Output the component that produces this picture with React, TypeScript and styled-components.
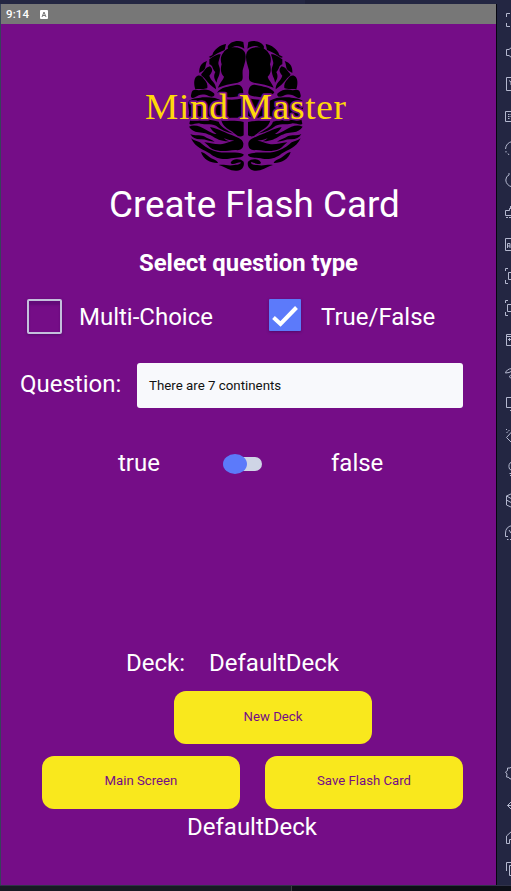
import React from "react";
import styled, { createGlobalStyle } from "styled-components";

const GlobalStyle = createGlobalStyle`
  * { box-sizing: border-box; }
  body { margin: 0; background: #232642; font-family: Roboto, "Liberation Sans", sans-serif; }
`;

const Emulator = styled.div`
  width: 511px;
  height: 891px;
  overflow: hidden;
  display: flex;
  flex-direction: column;
`;
const TitleStrip = styled.div`
  height: 4px;
  background: linear-gradient(90deg, #232642 0 305px, #1e2039 305px 350px, #232642 350px);
`;
const Middle = styled.div`
  display: flex;
  height: 881px;
  border-left: 1px solid #38405c;
`;
const Phone = styled.main`
  width: 495px;
  background: #750d87;
  color: #fff;
  display: flex;
  flex-direction: column;
`;
const StatusBar = styled.header`
  height: 20px;
  flex: none;
  background: #777;
  padding-left: 5px;
  display: flex;
  align-items: center;
  gap: 11px;
  font-size: 11.5px;
  font-weight: 500;
  letter-spacing: 0.1px;
`;
const Logo = styled.svg`
  display: block;
  margin: 6px 0 0 129px;
  flex: none;
`;
const Title = styled.h1`
  margin: 0;
  height: 49px;
  padding-left: 108px;
  font-size: 36.8px;
  font-weight: 400;
  line-height: 49px;
  white-space: nowrap;
`;
const Subtitle = styled.h2`
  margin: 10px 0 0;
  height: 48px;
  padding-left: 138px;
  font-size: 23.9px;
  font-weight: 700;
  line-height: 48px;
  white-space: nowrap;
`;
const Row = styled.div<{ $h: number; $top?: number; $left: number; $gap?: number }>`
  flex: none;
  display: flex;
  align-items: center;
  gap: ${(p) => p.$gap ?? 0}px;
  height: ${(p) => p.$h}px;
  margin-top: ${(p) => p.$top ?? 0}px;
  padding-left: ${(p) => p.$left}px;
`;
const Label = styled.span<{ $w?: number; $raise?: number }>`
  flex: none;
  width: ${(p) => (p.$w ? `${p.$w}px` : "auto")};
  padding-bottom: ${(p) => p.$raise ?? 0}px;
  font-size: 24px;
  line-height: 30px;
  white-space: nowrap;
`;
const Choice = styled.label<{ $w: number; $gap: number }>`
  display: flex;
  align-items: center;
  width: ${(p) => p.$w}px;
  gap: ${(p) => p.$gap}px;
`;
const EmptyBox = styled.span`
  width: 35px;
  height: 35px;
  margin-top: -1px;
  border: 2px solid rgba(205, 212, 230, 0.9);
  border-radius: 2px;
  box-shadow: 0 1px 3px rgba(30, 0, 60, 0.35), inset 0 4px 2px rgba(60, 0, 90, 0.3);
`;
const CheckedBox = styled.span`
  width: 32px;
  height: 32px;
  margin-top: -4px;
  background: #5c7afa;
  border-radius: 1px;
  box-shadow: 0 1px 3px rgba(30, 0, 60, 0.4);
`;
const Input = styled.div`
  width: 326px;
  height: 45px;
  border-radius: 3px;
  background: #f8f9fc;
  color: #111;
  padding-left: 12px;
  font-size: 13.3px;
  line-height: 46px;
`;
const Track = styled.span`
  flex: none;
  width: 30px;
  height: 14px;
  margin: 2px 69px 0 9px;
  display: flex;
  align-items: center;
  background: #cfd5e6;
  border-radius: 7px;
`;
const Thumb = styled.span`
  flex: none;
  width: 24px;
  height: 20px;
  margin-left: -9px;
  border-radius: 50%;
  background: #5c7afa;
`;
const Button = styled.button`
  flex: none;
  width: 198px;
  height: 53px;
  border: 0;
  border-radius: 12px;
  background: #f9e81d;
  color: #750d87;
  font: 400 13.2px/50px Roboto, sans-serif;
  padding: 0 0 2px;
`;
const Sidebar = styled.aside`
  width: 15px;
  border-left: 1px solid #060610;
  background: #232642;
  display: flex;
  flex-direction: column;
  justify-content: space-between;
`;
const ToolIcon = styled.svg`
  display: block;
  fill: none;
  stroke: #b4b8cf;
  stroke-width: 1;
`;
const BottomStrip = styled.div`
  height: 6px;
  display: flex;
  border-top: 1px solid #303348;
  background: #0d0f17;
`;
const Taskbar = styled.div`
  width: 292px;
  border-right: 1px solid #3c3e44;
  background: #181b24;
`;

/* Left hemisphere of the brain; the right one is its mirror image. */
const lobes = [
  "M293 50C298 36 321 28 340 36L343 56C323 42 308 48 300 57L294 58Z",
  "M236 81L247 75C252 57 271 45 288 42L284 60C270 64 255 75 242 83Z",
  "M280 68C293 48 331 46 344 66C352 84 342 104 338 121C336 141 345 153 323 158C300 161 280 166 264 173C268 160 280 149 282 140C270 130 272 113 275 103C270 87 273 76 280 68Z",
  "M238 88C254 75 267 71 272 73L266 94C262 106 273 111 269 128C267 141 261 145 260 158C252 146 250 138 256 126C247 119 249 105 238 103Z",
  "M208 129C206 110 216 97 231 93C225 105 229 118 218 123Z",
  "M214 132C224 122 228 111 240 109C251 118 246 128 238 137C242 153 259 158 258 178C245 170 235 160 226 148C220 139 212 138 214 132Z",
  "M197 142C205 131 217 138 221 146C230 154 234 165 232 174C220 180 207 175 196 178C192 165 191 151 197 142Z",
  "M184 191C186 176 198 178 207 181C220 178 236 176 252 190C257 199 247 203 236 198C221 190 207 193 195 202C186 207 180 202 184 191Z",
  "M262 187C273 171 296 170 317 165C333 160 341 174 340 194C323 200 306 204 286 200C276 197 266 195 262 187Z",
  "M175 216C183 204 201 206 217 202C240 200 260 203 276 212L278 264C254 267 237 260 215 262C194 260 187 269 175 260C181 246 173 233 175 216Z",
  "M282 207C300 210 321 210 339 204L341 259C321 268 307 259 290 266L282 258Z",
  "M181 267C197 258 211 266 226 266C242 272 249 269 266 275C271 292 292 300 311 311C290 307 272 299 258 287C241 279 222 286 207 280C194 280 184 287 178 281Z",
  "M274 271C292 274 316 270 341 276L341 316C325 326 317 312 305 304C291 296 279 290 274 271Z",
  "M177 290C193 281 213 290 228 299C240 305 245 309 255 312C276 314 290 308 303 318C276 317 276 326 298 334C274 335 259 326 246 318C230 311 222 308 205 307C192 305 184 300 177 290Z",
  "M240 291C268 296 285 309 307 316C320 323 338 326 340 340C341 358 330 362 316 360C288 363 268 366 247 357C235 350 231 342 223 337C244 339 260 345 277 342C290 340 301 333 313 332C292 330 279 324 268 318C257 309 246 304 240 291Z",
  "M181 312C195 319 209 313 222 319C231 326 246 329 254 335C239 335 226 327 211 328C197 328 187 323 181 312Z",
  "M183 325C195 334 205 332 216 342C229 354 247 362 264 366C287 371 318 363 341 373C341 386 314 382 297 386C277 390 254 383 241 371C220 359 197 354 183 325Z",
  "M213 366C229 370 234 381 249 387C259 391 263 395 264 399C244 400 219 389 213 366Z",
  "M266 405C285 403 296 409 313 405C325 405 334 401 332 397C323 397 307 407 302 399C304 386 331 383 341 395C345 411 334 421 321 422C302 424 288 412 266 405Z",
];

const Hemisphere = () => (
  <g fill="#000">
    {lobes.map((d) => (
      <path key={d} d={d} />
    ))}
  </g>
);

const BrainLogo = () => (
  <Logo width="230" height="150" viewBox="0 0 690 450">
    <Hemisphere />
    <g transform="matrix(-1 0 0 1 695 0)">
      <Hemisphere />
    </g>
    <text
      x="45" y="266" textLength="605" lengthAdjust="spacingAndGlyphs" fontSize="107" fill="#ffd80a"
      fontFamily="'Liberation Serif', serif" letterSpacing="2" stroke="#750d87" strokeWidth="10"
      strokeLinejoin="round" paintOrder="stroke"
    >
      Mind Master
    </text>
  </Logo>
);

const tools = [
  "M13 9.5H9.500V13M9.500 19V22.500H13",
  "M9.500 13.500V19.500H12L15 22M9.500 13.500H12L15 11",
  "M15 9.500H9.500V22.500H15M12 12.500L14 14V17",
  "M15 11.500H8.500V21.500H15M11 14.500H12.500M13.500 14.500H15M11 16.500H12.500M13.500 16.500H15M11 18.500H12.500",
  "M15 9.500Q9 11 8.500 17M9 19V20.500M11 21.500L12 23M14 23.500H15",
  "M12 9V11Q9 12 8.800 16Q9 21 15 23",
  "M15 12.500H12.500V14.500H8.500V19.500H15M13.500 10V12.500M9 21.500H11M12 21.500H14",
  "M14 10.500H8.500V22.500H14M10.500 20V15.500H13V20M10.500 18H13",
  "M11 8.500H8.500V11M8.500 20V23.500H11M15 12.500H11.500V19.500H15",
  "M11 8.500H8.500V11M8.500 20V23.500H11M15 12.500H10.500V19.500H15",
  "M15 10.500H9.500V21.500H15M9.500 12.500H15M11 15.500H14M12.500 14V17",
  "M15 12.500Q9.500 13 8.500 17L12 16.500L15 15M15 19Q11 19.500 13.500 22H15",
  "M15 9.500H9.500V19.500H15M13 22.500H15",
  "M9 9.500H10M11 11.500L12.500 10M9.500 12.500H10.500M15 11.500L9.500 17.500L15 23",
  "M15 9.500Q10.500 12 12.500 17L14 18M12.500 21.500H15M13 23.500H15",
  "M15 9.500L9.500 12V21L15 23.500M9.500 12L15 15M9.500 16L15 19",
  "M15 9.500Q8.500 11 8.500 17V20.500H11M12 14L14 17H15M10 23.500H11.500M13 23.500H15",
];
const navigation = [
  "M15 9.500L13 11H10.500V13.500L8.500 15L10 17L9.500 20L12 20.500L13 22L15 21.500",
  "M15 12L10.500 16.500L15 21M10.500 16.500H15",
  "M15 10L9.500 15V22.500H12.500V18.500H15",
  "M15 9.500H9.500V18M15 12.500H12.500V22.500H15",
];

const ToolGroup = ({ icons }: { icons: string[] }) => (
  <nav>
    {icons.map((d) => (
      <ToolIcon key={d} width="14" height="32" viewBox="0 0 14 32">
        <path d={d} />
      </ToolIcon>
    ))}
  </nav>
);

export default function App() {
  return (
    <>
      <GlobalStyle />
      <Emulator>
        <TitleStrip />
        <Middle>
          <Phone>
            <StatusBar>
              9:14
              <svg width="8" height="9" viewBox="0 0 8 9">
                <rect width="8" height="9" rx="1" fill="#fff" />
                <path d="M2 7L4 2L6 7M2.700 5.500H5.300" fill="none" stroke="#777" />
              </svg>
            </StatusBar>
            <BrainLogo />
            <Title>Create Flash Card</Title>
            <Subtitle>Select question type</Subtitle>
            <Row $h={52} $top={4} $left={26}>
              <Choice $w={242} $gap={17}>
                <EmptyBox />
                <Label>Multi-Choice</Label>
              </Choice>
              <Choice $w={190} $gap={20}>
                <CheckedBox>
                  <svg width="32" height="32" viewBox="0 0 32 32">
                    <path d="M4.500 18.500L11.500 25L27.500 8.500" fill="none" stroke="#fff" strokeWidth="4" />
                  </svg>
                </CheckedBox>
                <Label>True/False</Label>
              </Choice>
            </Row>
            <Row $h={45} $top={20} $left={19}>
              <Label $w={117} $raise={4}>Question:</Label>
              <Input>There are 7 continents</Input>
            </Row>
            <Row $h={48} $top={31} $left={117}>
              <Label $w={105}>true</Label>
              <Track>
                <Thumb />
              </Track>
              <Label>false</Label>
            </Row>
            <Row $h={48} $top={152} $left={125}>
              <Label $w={83}>Deck:</Label>
              <Label>DefaultDeck</Label>
            </Row>
            <Row $h={53} $top={4} $left={173}>
              <Button>New Deck</Button>
            </Row>
            <Row $h={53} $top={11.5} $left={41} $gap={25}>
              <Button>Main Screen</Button>
              <Button>Save Flash Card</Button>
            </Row>
            <Row $h={36} $left={186}>
              <Label>DefaultDeck</Label>
            </Row>
          </Phone>
          <Sidebar>
            <ToolGroup icons={tools} />
            <ToolGroup icons={navigation} />
          </Sidebar>
        </Middle>
        <BottomStrip>
          <Taskbar />
        </BottomStrip>
      </Emulator>
    </>
  );
}
